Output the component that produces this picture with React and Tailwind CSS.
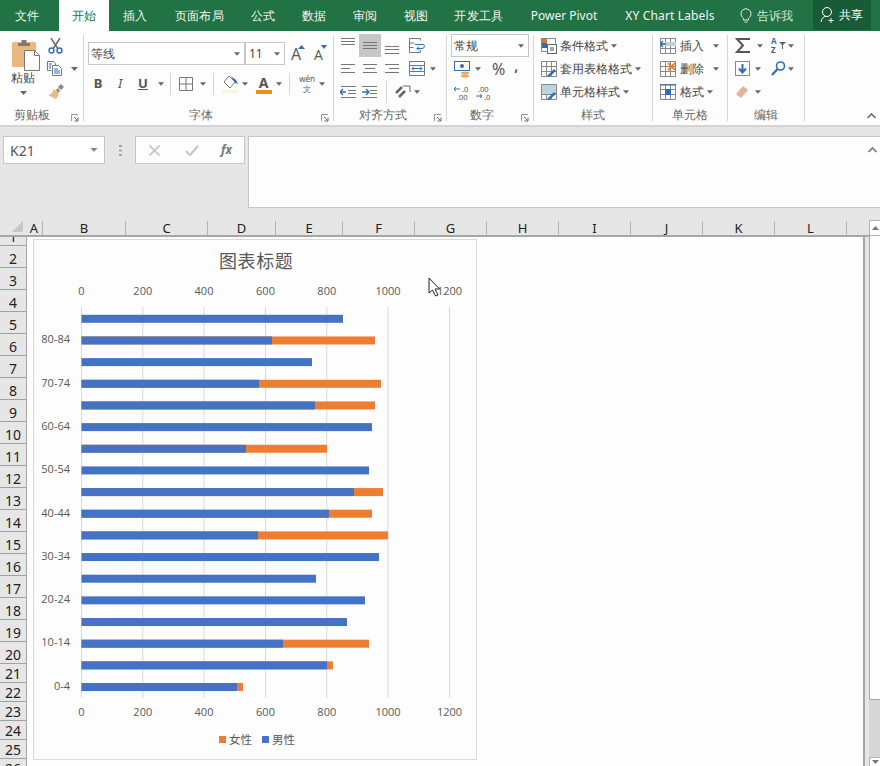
import React from "react";

const Caret = ({ c = "#666", w = 7 }) => (
  <svg width={w} height="4" viewBox="0 0 7 4" className="shrink-0"><path d="M0 0h7L3.5 4z" fill={c} /></svg>
);
const Ico = ({ w = 16, h = 16, children }) => (
  <svg width={w} height={h} viewBox={`0 0 ${w} ${h}`} fill="none" className="shrink-0">{children}</svg>
);
const B = "#2f6db5";

const Lines = ({ ys, l }) => (
  <Ico w={16} h={16}>
    {ys.map((y, i) => (<path key={i} d={`M${l[i][0]} ${y + 0.5}H${l[i][1]}`} stroke="#777" />))}
  </Ico>
);

const Launcher = () => (
  <svg width="8" height="8" viewBox="0 0 8 8" className="absolute right-[4px] bottom-[3px]" fill="none">
    <path d="M.5 7V.5H7" stroke="#999" />
    <path d="M3 3l3.5 3.5M7 3.5V7H3.5" stroke="#666" />
  </svg>
);

const Group = ({ w, label, launcher, pr = "", children }) => (
  <div className={`flex flex-col h-full shrink-0 ${w}`}>
    <div className="flex-1 min-h-0">{children}</div>
    <div className={`relative h-[20px] text-center text-[12px] leading-[19px] text-[#666] ${pr}`}>
      {label}
      {launcher && <Launcher />}
    </div>
  </div>
);
const Sep = () => <div className="w-px shrink-0 self-stretch mt-[4px] mb-[4px] bg-[#d6d6d6]" />;

function Tabs() {
  const tabs = [
    ["文件", "w-[59px] pr-[5px] tracking-[0.4px]"], ["开始", "w-[50px] tracking-[0.4px]", true], ["插入", "w-[52px] tracking-[0.4px]"], ["页面布局", "w-[77px] tracking-[0.4px]"],
    ["公式", "w-[50px] tracking-[0.4px]"], ["数据", "w-[52px] tracking-[0.4px]"], ["审阅", "w-[51px] tracking-[0.4px]"], ["视图", "w-[50px] tracking-[0.4px]"],
    ["开发工具", "w-[76px] tracking-[0.4px]"], ["Power Pivot", "w-[94px]"], ["XY Chart Labels", "w-[118px] tracking-[0.15px]"],
  ];
  return (
    <div className="flex h-[31px] bg-[#217346] text-white text-[12px]">
      {tabs.map(([t, w, active]) => (
        <div key={t} className={`${w} shrink-0 flex items-center justify-center ${active ? "bg-[#fdfdfd] text-[#217346] h-[31px]" : "text-[#f1f6f3]"}`}>{t}</div>
      ))}
      <div className="flex items-center ml-[11px] w-[73px] shrink-0 text-[#d5e5dc]">
        <svg width="12" height="15" viewBox="0 0 12 15" fill="none"><path d="M3.5 10.5C2 9 1 8 1 5.8a5 5 0 0 1 10 0C11 8 10 9 8.5 10.5V12h-5zM4.5 14h3" stroke="#e8f0eb" /></svg>
        <span className="ml-[5px]">告诉我</span>
      </div>
      <div className="w-[58px] h-[30px] shrink-0 bg-[#185b37] flex items-center pl-[7px]">
        <svg width="16" height="18" viewBox="0 0 16 18" fill="none"><circle cx="7" cy="6" r="4.5" stroke="#fff" /><path d="M1 16c.5-3.5 2.5-5.5 5-5.7M11 12v5M8.5 14.5h5" stroke="#fff" /></svg>
        <span className="ml-[3px] tracking-[0.4px]">共享</span>
      </div>
    </div>
  );
}

function Clipboard() {
  return (
    <div className="flex pt-[3px]">
      <div className="w-[46px] flex flex-col items-center">
        <svg width="30" height="33" viewBox="0 0 30 33" fill="none" className="ml-[7px] mt-[5px]">
          <rect x="0" y="3" width="24" height="25" rx="1.5" fill="#e9b77f" />
          <path d="M6 4h12v3H6zM9.500 1h5v3h-5z" fill="#7a7a7a" />
          <path d="M12.500 11.500h10l5 5v15h-15z" fill="#fff" stroke="#777" />
          <path d="M22.500 11.500v5h5" stroke="#777" />
        </svg>
        <div className="text-[12px] leading-[16px] text-[#444] tracking-[0.5px] -mt-[2px]">粘贴</div>
        <div className="mt-[5px]"><Caret /></div>
      </div>
      <div className="flex flex-col pl-[1px] w-[36px]">
        <div className="h-[23px] flex items-center pl-[1px]">
          <svg width="15" height="16" viewBox="0 0 15 16" fill="none"><path d="M3 0l7 11M12 0L5 11" stroke="#666" strokeWidth="1.4" /><circle cx="3.500" cy="12.500" r="2.500" stroke={B} strokeWidth="1.4" /><circle cx="11.500" cy="12.500" r="2.500" stroke={B} strokeWidth="1.4" /></svg>
        </div>
        <div className="h-[23px] flex items-center">
          <svg width="16" height="15" viewBox="0 0 16 15" fill="none"><path d="M.5.5h6l2 2v2M.5.500v9h4" stroke="#777" /><path d="M5.500 4.500h6l3 3v7h-9z" fill="#fff" stroke="#777" /><path d="M7 8h4M7 10h6M7 12h6" stroke={B} /><path d="M2 3h3M2 5h2M2 7h2" stroke={B} /></svg>
          <span className="ml-[8px]"><Caret /></span>
        </div>
        <div className="h-[23px] flex items-center">
          <svg width="17" height="15" viewBox="0 0 17 15" fill="none"><path d="M9 6l2-2 2 3-2 2z" fill="#888" /><path d="M11 3l3-3 3 3-3 3z" fill="#888" /><path d="M7 5l5 5-3 5-8-4c3 0 5-3 6-6z" fill="#e9b77f" /></svg>
        </div>
      </div>
    </div>
  );
}

function FontG() {
  const Cell = ({ w, children }) => <div className={`${w} shrink-0 flex items-center justify-center`}>{children}</div>;
  const Bar = () => <div className="w-px h-[22px] bg-[#d6d6d6] shrink-0" />;
  return (
    <div className="pt-[11px] pl-[4px]">
      <div className="flex items-start h-[23px]">
        <div className="w-[197px] h-[23px] bg-white border border-[#c6c6c6] flex items-center text-[12px] text-[#444] shrink-0">
          <div className="w-[157px] h-full flex items-center pl-[2px] pr-[4px] justify-between border-r-2 border-[#c6c6c6]">
            <span>等线</span><Caret w={6} />
          </div>
          <div className="flex-1 flex items-center justify-between pl-[3px] pr-[4px]"><span>11</span><Caret w={6} /></div>
        </div>
        <svg width="40" height="23" viewBox="0 0 40 23" className="ml-[5px]" fill="none">
          <text x="1" y="18" fontSize="16" fill="#555" fontFamily="Open Sans, sans-serif">A</text>
          <path d="M8 7h7l-3.500-4z" fill={B} />
          <text x="24" y="18" fontSize="14" fill="#555" fontFamily="Open Sans, sans-serif">A</text>
          <path d="M31 3h6l-3 4z" fill={B} />
        </svg>
      </div>
      <div className="flex items-center h-[24px] mt-[7px] text-[#555]">
        <Cell w="w-[20px]"><b className="text-[13px] font-['Liberation_Sans',sans-serif]">B</b></Cell>
        <Cell w="w-[24px]"><i className="text-[13px] font-['Liberation_Serif',serif]">I</i></Cell>
        <Cell w="w-[22px]"><span className="text-[13px] font-bold underline font-['Liberation_Sans',sans-serif]">U</span></Cell>
        <Cell w="w-[13px]"><Caret w={6} /></Cell>
        <div className="w-[3px] shrink-0" /><Bar /><div className="w-[8px] shrink-0" />
        <Ico w={14} h={14}><path d="M.5.500h13v13H.5zM7 .5v13M.5 7h13" stroke="#777" /></Ico>
        <Cell w="w-[20px]"><Caret w={6} /></Cell>
        <Bar /><div className="w-[8px] shrink-0" />
        <svg width="16" height="19" viewBox="0 0 16 19" fill="none" className="shrink-0"><path d="M7 1l6 6-5 6-6-6z" fill="#fff" stroke="#777" /><path d="M9 1l5 4 2 4-3-1z" fill={B} /><rect x="0" y="15" width="16" height="3" fill="#f7f8dc" /></svg>
        <Cell w="w-[14px]"><Caret w={6} /></Cell>
        <div className="w-[3px] shrink-0" />
        <div className="w-[17px] shrink-0 flex flex-col items-center">
          <span className="text-[14px] leading-[15px] font-bold font-['Open_Sans',sans-serif] text-[#555]">A</span>
          <div className="w-[16px] h-[4px] bg-[#f08c1d]" />
        </div>
        <Cell w="w-[14px]"><Caret w={6} /></Cell>
        <div className="w-[3px] shrink-0" /><Bar /><div className="w-[5px] shrink-0" />
        <div className="w-[24px] shrink-0 flex flex-col items-center leading-none">
          <span className="text-[8px] text-[#555] leading-[10px] font-['Open_Sans',sans-serif]">wén</span>
          <span className="text-[8px] text-[#2f6db5] leading-[10px]">文</span>
        </div>
        <Cell w="w-[6px]"><Caret w={6} /></Cell>
      </div>
    </div>
  );
}

function Align() {
  const C = ({ w = "w-[22px]", children, active }) => (
    <div className={`${w} h-[23px] shrink-0 flex items-center justify-center ${active ? "bg-[#c6c6c6]" : ""}`}>{children}</div>
  );
  const L3 = (ys, a, b, c) => <Lines ys={ys} l={[a, b, c]} />;
  return (
    <div className="pt-[3px] pl-[3px]">
      <div className="flex">
        <C>{L3([0, 3, 6], [1, 15], [1, 15], [1, 15])}</C>
        <C active>{L3([4, 7, 10], [1, 15], [1, 15], [1, 15])}</C>
        <C>{L3([8, 11, 15], [1, 15], [1, 15], [1, 15])}</C>
        <div className="w-[3px] shrink-0" />
        <C>
          <svg width="17" height="16" viewBox="0 0 17 16" fill="none"><path d="M.5.5h11M.5 5h5M.5 9.500h4M.5 14.500h11M.5.500v14M11.500.500v2M11.500 12v2.500" stroke="#777" /><path d="M6 6.500h8c2 0 2 4-1 4H8m2-2l-2 2 2 2" stroke={B} /></svg>
        </C>
      </div>
      <div className="flex">
        <C>{L3([3, 7, 11], [1, 15], [1, 10], [1, 15])}</C>
        <C>{L3([3, 7, 11], [1, 15], [3, 13], [1, 15])}</C>
        <C>{L3([3, 7, 11], [1, 15], [5, 15], [1, 15])}</C>
        <div className="w-[3px] shrink-0" />
        <C>
          <svg width="16" height="15" viewBox="0 0 16 15" fill="none"><path d="M.5.500h15v14H.5zM.5 4.500h15M.5 10.500h15" stroke="#777" /><path d="M3 7.500h10M5 5.500l-2 2 2 2M11 5.500l2 2-2 2" stroke={B} /></svg>
        </C>
        <span className="self-center ml-[2px]"><Caret w={6} /></span>
      </div>
      <div className="flex items-center">
        <C>
          <svg width="16" height="12" viewBox="0 0 16 12" fill="none"><path d="M0 6h6M3 3L0 6l3 3" stroke={B} strokeWidth="1.400" /><path d="M1 .5h15M8 4.500h8M8 7.500h8M1 11.500h15" stroke="#777" /></svg>
        </C>
        <C>
          <svg width="16" height="12" viewBox="0 0 16 12" fill="none"><path d="M0 6h6M4 3l3 3-3 3" stroke={B} strokeWidth="1.400" /><path d="M0 .5h15M8 4.500h7M8 7.500h7M0 11.500h15" stroke="#777" /></svg>
        </C>
        <div className="w-[1px] h-[22px] bg-[#d6d6d6] ml-[5px] shrink-0" />
        <div className="w-[7px] shrink-0" />
        <svg width="18" height="16" viewBox="0 0 18 16" fill="none" className="shrink-0"><path d="M2 9l6-6M5 13l6-6" stroke="#666" strokeWidth="2.500" /><path d="M9 2l7 0M16 2v6" stroke="#666" /></svg>
        <span className="ml-[2px]"><Caret w={6} /></span>
      </div>
    </div>
  );
}

function NumberG() {
  return (
    <div className="pt-[3px] pl-[4px]">
      <div className="w-[78px] h-[23px] border border-[#c6c6c6] bg-white flex items-center justify-between pl-[2px] pr-[4px] text-[12px] text-[#444]">
        <span>常规</span><Caret w={6} />
      </div>
      <div className="flex items-center h-[22px] mt-[1px] pl-[3px]">
        <svg width="16" height="17" viewBox="0 0 16 17" fill="none" className="shrink-0"><rect x=".5" y=".5" width="15" height="9" stroke={B} /><circle cx="8" cy="5" r="2" fill={B} /><ellipse cx="11" cy="12" rx="4" ry="1.500" fill="#e9a860" /><ellipse cx="11" cy="15" rx="4" ry="1.500" fill="#e9a860" /></svg>
        <span className="ml-[5px]"><Caret w={6} /></span>
        <span className="ml-[11px] text-[16px] text-[#555] leading-none font-['Open_Sans',sans-serif]">%</span>
        <span className="ml-[9px] text-[14px] font-bold text-[#555] leading-none -mt-[6px] font-['Open_Sans',sans-serif]">,</span>
      </div>
      <div className="flex items-center h-[24px] pl-[3px] font-['Open_Sans',sans-serif] text-[#555]">
        <svg width="15" height="15" viewBox="0 0 15 15" fill="none" className="shrink-0"><path d="M0 4h6M2 2L0 4l2 2" stroke={B} /><text x="8" y="7" fontSize="7.500" fill="#555">.0</text><text x="3" y="14.500" fontSize="7.500" fill="#555">.00</text></svg>
        <svg width="16" height="15" viewBox="0 0 16 15" fill="none" className="ml-[7px] shrink-0"><text x="2" y="7" fontSize="7.500" fill="#555">.00</text><path d="M0 11h6M4 9l2 2-2 2" stroke={B} /><text x="8" y="14.500" fontSize="7.500" fill="#555">.0</text></svg>
      </div>
    </div>
  );
}

const GridIcon = ({ children }) => (
  <svg width="16" height="16" viewBox="0 0 16 16" fill="none" className="shrink-0">
    <path d="M.5.5h15v15H.5zM5.500.5v15M10.500.5v15M.5 5.500h15M.5 10.500h15" stroke="#888" />
    {children}
  </svg>
);

function Styles() {
  const rows = [
    ["条件格式", <svg key="a" width="16" height="16" viewBox="0 0 16 16" fill="none" className="shrink-0"><rect x="0" y="0" width="6" height="5" fill="#d9782c" /><rect x="0" y="5" width="6" height="5" fill={B} /><path d="M.5.500h14v5M.5.500v13h6" stroke="#888" /><rect x="6.500" y="6.500" width="9" height="9" fill="#fff" stroke="#666" /><path d="M9 10h4M9 12h4" stroke="#555" /></svg>],
    ["套用表格格式", <GridIcon key="b"><path d="M6 15l7-7 2 2-7 6z" fill={B} /></GridIcon>],
    ["单元格样式", <GridIcon key="c"><rect x="1" y="1" width="14" height="9" fill="#bcd4de" /><path d="M6 15l7-7 2 2-7 6z" fill={B} /></GridIcon>],
  ];
  return (
    <div className="pt-[3px] pl-[7px] text-[12px] text-[#444]">
      {rows.map(([t, ic]) => (
        <div key={t} className="h-[23px] flex items-center">
          {ic}
          <span className="ml-[3px] mr-[3px]">{t}</span>
          <Caret w={6} />
        </div>
      ))}
    </div>
  );
}

function Cells() {
  const rows = [
    ["插入", "ml-[9px]", <GridIcon key="a"><rect x="5" y="4" width="11" height="4" fill="#bcd4de" /><path d="M0 6h6M3 3L0 6l3 3" stroke={B} strokeWidth="1.500" /></GridIcon>],
    ["删除", "ml-[9px]", <GridIcon key="b"><path d="M8 2l7 7M15 2L8 9" stroke="#e0812d" strokeWidth="1.800" /></GridIcon>],
    ["格式", "ml-[3px]", <GridIcon key="c"><rect x="5" y="5" width="6" height="6" fill={B} /><path d="M0 1h16" stroke={B} /></GridIcon>],
  ];
  return (
    <div className="pt-[3px] pl-[7px] text-[12px] text-[#444]">
      {rows.map(([t, m, ic]) => (
        <div key={t} className="h-[23px] flex items-center">
          {ic}
          <span className="ml-[4px]">{t}</span>
          <span className={m}><Caret w={6} /></span>
        </div>
      ))}
    </div>
  );
}

function Edit() {
  return (
    <div className="pt-[3px] pl-[7px] grid grid-cols-[36px_36px] text-[#555]">
      <div className="h-[23px] flex items-center">
        <svg width="16" height="15" viewBox="0 0 16 15" fill="none" className="shrink-0"><path d="M15 1H2l6 6.500L2 14h13" stroke="#555" strokeWidth="2" /></svg>
        <span className="ml-[6px]"><Caret w={6} /></span>
      </div>
      <div className="h-[23px] flex items-center">
        <svg width="16" height="17" viewBox="0 0 16 17" fill="none" className="shrink-0"><text x="0" y="7" fontSize="8" fontWeight="700" fill={B} fontFamily="Open Sans, sans-serif">A</text><text x="0" y="16" fontSize="8" fontWeight="700" fill="#555" fontFamily="Open Sans, sans-serif">Z</text><path d="M8 5h7l-3 3v4h-1V8z" fill="#666" /></svg>
        <span className="ml-[1px]"><Caret w={6} /></span>
      </div>
      <div className="h-[23px] flex items-center">
        <svg width="15" height="15" viewBox="0 0 15 15" fill="none" className="shrink-0"><rect x=".5" y=".5" width="14" height="14" stroke="#888" /><path d="M7.500 3v8M4 7.500l3.500 4 3.500-4" stroke={B} strokeWidth="2" /></svg>
        <span className="ml-[5px]"><Caret w={6} /></span>
      </div>
      <div className="h-[23px] flex items-center">
        <svg width="15" height="15" viewBox="0 0 15 15" fill="none" className="shrink-0"><circle cx="9.500" cy="5" r="4" stroke={B} strokeWidth="1.600" /><path d="M6.500 8L1 14" stroke={B} strokeWidth="2.200" /></svg>
        <span className="ml-[2px]"><Caret w={6} /></span>
      </div>
      <div className="h-[23px] flex items-center">
        <svg width="14" height="14" viewBox="0 0 14 14" fill="none" className="shrink-0"><path d="M8 1l5 4-7 8-5-4z" fill="#e6b196" /></svg>
        <span className="ml-[6px]"><Caret w={6} /></span>
      </div>
    </div>
  );
}

function Ribbon() {
  return (
    <div className="relative flex h-[94px] bg-[#fdfdfd]">
      <Group w="w-[83px]" label="剪贴板" launcher pr="pr-[19px]"><Clipboard /></Group><Sep />
      <Group w="w-[249px]" label="字体" launcher pr="pr-[16px]"><FontG /></Group><Sep />
      <Group w="w-[112px]" label="对齐方式" launcher pr="pr-[14px]"><Align /></Group><Sep />
      <Group w="w-[86px]" label="数字" launcher pr="pr-[16px]"><NumberG /></Group><Sep />
      <Group w="w-[118px]" label="样式"><Styles /></Group><Sep />
      <Group w="w-[74px]" label="单元格"><Cells /></Group><Sep />
      <Group w="w-[76px]" label="编辑"><Edit /></Group><Sep />
      <svg width="9" height="6" viewBox="0 0 9 6" fill="none" className="absolute right-[4px] bottom-[6px]"><path d="M.5 5l4-4 4 4" stroke="#666" strokeWidth="1.500" /></svg>
    </div>
  );
}

function FormulaBar() {
  return (
    <div className="h-[95px] border-t-2 border-[#d4d4d4] bg-[#e6e6e6] flex items-start pt-[9px] pl-[3px]">
      <div className="w-[102px] h-[28px] bg-white border border-[#c6c6c6] flex items-center justify-between pl-[6px] pr-[6px] text-[14px] text-[#555] shrink-0 font-['Open_Sans',sans-serif]">
        <span>K21</span><Caret c="#888" w={8} />
      </div>
      <div className="w-[30px] h-[28px] flex items-center justify-center shrink-0">
        <svg width="3" height="11" viewBox="0 0 3 11"><path d="M0 0h3v2H0zM0 4.500h3v2H0zM0 9h3v2H0z" fill="#a5a5a5" /></svg>
      </div>
      <div className="w-[110px] h-[28px] bg-[#fdfdfd] border border-[#c6c6c6] flex items-center shrink-0 pl-[13px]">
        <svg width="11" height="11" viewBox="0 0 11 11" fill="none"><path d="M.5.500l10 10M10.500.500l-10 10" stroke="#c4c4c4" strokeWidth="1.600" /></svg>
        <svg width="14" height="11" viewBox="0 0 14 11" fill="none" className="ml-[25px]"><path d="M1 6l4 4 8-9" stroke="#c4c4c4" strokeWidth="2" /></svg>
        <span className="ml-[22px] text-[12px] italic font-bold text-[#777] font-['Liberation_Serif',serif]">fx</span>
      </div>
      <div className="flex-1 ml-[3px] h-[72px] bg-[#fefefe] border border-r-0 border-[#c6c6c6] flex justify-end pt-[10px] pr-[3px]">
        <svg width="9" height="6" viewBox="0 0 9 6" fill="none"><path d="M.5 5l4-4 4 4" stroke="#777" strokeWidth="1.600" /></svg>
      </div>
    </div>
  );
}

const cols = [
  ["A", "w-[17px]"], ["B", "w-[83px]"], ["C", "w-[82px]"], ["D", "w-[68px]"], ["E", "w-[67px]"], ["F", "w-[72px]"],
  ["G", "w-[72px]"], ["H", "w-[72px]"], ["I", "w-[72px]"], ["J", "w-[72px]"], ["K", "w-[72px]"], ["L", "w-[72px]"],
];

function ColHeader() {
  return (
    <div className="flex h-[16px] mt-[1px] bg-[#e6e6e6] border-b-2 border-[#a6a6a6] font-['Open_Sans',sans-serif] text-[13px] leading-[15px] text-[#222]">
      <div className="w-[26px] shrink-0 flex justify-end items-start pr-[3px]">
        <svg width="11" height="11" viewBox="0 0 11 11"><path d="M11 0v11H0z" fill="#c6c6c6" /></svg>
      </div>
      {cols.map(([c, w]) => (
        <div key={c} className={`${w} shrink-0 text-center border-r border-[#b4b4b4]`}>{c}</div>
      ))}
    </div>
  );
}

function RowHeader() {
  const rows = [];
  rows.push([1, "h-[9px]"]);
  for (let i = 2; i <= 20; i++) rows.push([i, "h-[22px]"]);
  for (let i = 21; i <= 26; i++) rows.push([i, "h-[19px]"]);
  return (
    <div className="w-[27px] shrink-0 bg-[#e6e6e6] border-r border-[#a6a6a6] overflow-hidden font-['Open_Sans',sans-serif] text-[14px] leading-[16px] text-[#222]">
      {rows.map(([n, h]) => (
        <div key={n} className={`${h} flex items-end justify-center overflow-hidden border-b border-[#a0a0a0]`}>{n}</div>
      ))}
    </div>
  );
}

const bars = [
  [343], [272, 375], [312], [259, 381], [315, 375], [372], [246, 327], [369], [354, 383],
  [329, 372], [258, 388], [379], [316], [365], [347], [283, 369], [327, 333], [237, 243],
];
const ticks = [[0, 81.5], [200, 142.8], [400, 204], [600, 265.5], [800, 326.8], [1000, 388], [1200, 449.5]];
const yLabels = ["80-84", "70-74", "60-64", "50-54", "40-44", "30-34", "20-24", "10-14", "0-4"];
const yLabelPos = [339, 383, 426, 469, 513, 556, 599, 642, 686];

function Chart() {
  const tf = { fontFamily: "Open Sans, sans-serif", fontSize: 11, fill: "#595959" };
  const cf = { fontFamily: "Noto Sans CJK SC, sans-serif", fill: "#595959" };
  return (
    <div className="absolute left-[6px] top-[2px] w-[444px] h-[521px] bg-[#fdfdfd] border border-[#d9d9d9]">
      <svg width="442" height="519" viewBox="34 240 442 519">
        <text x="219" y="268" fontSize="18" letterSpacing="0.6" {...cf}>图表标题</text>
        {ticks.map(([v, x]) => (
          <g key={v}>
            <path d={`M${x} 307V698`} stroke="#d9d9d9" strokeWidth="1" />
            <text x={x} y="295" textAnchor="middle" {...tf}>{v}</text>
            <text x={x} y="716" textAnchor="middle" {...tf}>{v}</text>
          </g>
        ))}
        {bars.map((b, i) => {
          const y = 314.8 + i * 21.66;
          return (
            <g key={i}>
              {b[1] && <rect x="81.500" y={y} width={b[1] - 81.5} height="8" fill="#ed7d31" />}
              <rect x="81.500" y={y} width={b[0] - 81.5} height="8" fill="#4472c4" />
            </g>
          );
        })}
        {yLabels.map((l, i) => (
          <text key={l} x="70" y={yLabelPos[i] + 4} textAnchor="end" {...tf}>{l}</text>
        ))}
        <rect x="219" y="736" width="7" height="7" fill="#ed7d31" />
        <text x="229" y="743.500" fontSize="11.500" {...cf}>女性</text>
        <rect x="262" y="736" width="7" height="7" fill="#4472c4" />
        <text x="272" y="743.500" fontSize="11.500" {...cf}>男性</text>
        <path d="M429 278v15l3.500-3 3 6 2.500-1-3-6h4.500z" fill="#fff" stroke="#222" strokeWidth="1" />
      </svg>
    </div>
  );
}

function Scrollbar() {
  return (
    <div className="w-[11px] shrink-0 flex flex-col bg-[#d6d6d6]">
      <div className="h-[16px] bg-white border border-[#b4b4b4] border-r-0 flex items-center justify-center">
        <svg width="7" height="4" viewBox="0 0 7 4"><path d="M0 4h7L3.500 0z" fill="#777" /></svg>
      </div>
      <div className="h-[464px] bg-[#fefefe] border-l border-b border-[#a6a6a6]" />
      <div className="flex-1" />
      <div className="h-[9px] bg-white border-l border-t border-[#b4b4b4] flex justify-center pt-[2px]">
        <Caret c="#777" />
      </div>
    </div>
  );
}

export default function App() {
  return (
    <div className="w-[880px] h-[766px] overflow-hidden bg-[#e6e6e6] font-['Noto_Sans','Noto_Sans_CJK_SC',sans-serif]">
      <Tabs />
      <Ribbon />
      <FormulaBar />
      <div className="flex h-[546px]">
        <div className="w-[869px] shrink-0 flex flex-col">
          <ColHeader />
          <div className="flex flex-1 min-h-0">
            <RowHeader />
            <div className="relative w-[838px] shrink-0 bg-[#fefefe] border-r-2 border-[#a6a6a6]">
              <Chart />
            </div>
          </div>
        </div>
        <Scrollbar />
      </div>
    </div>
  );
}
